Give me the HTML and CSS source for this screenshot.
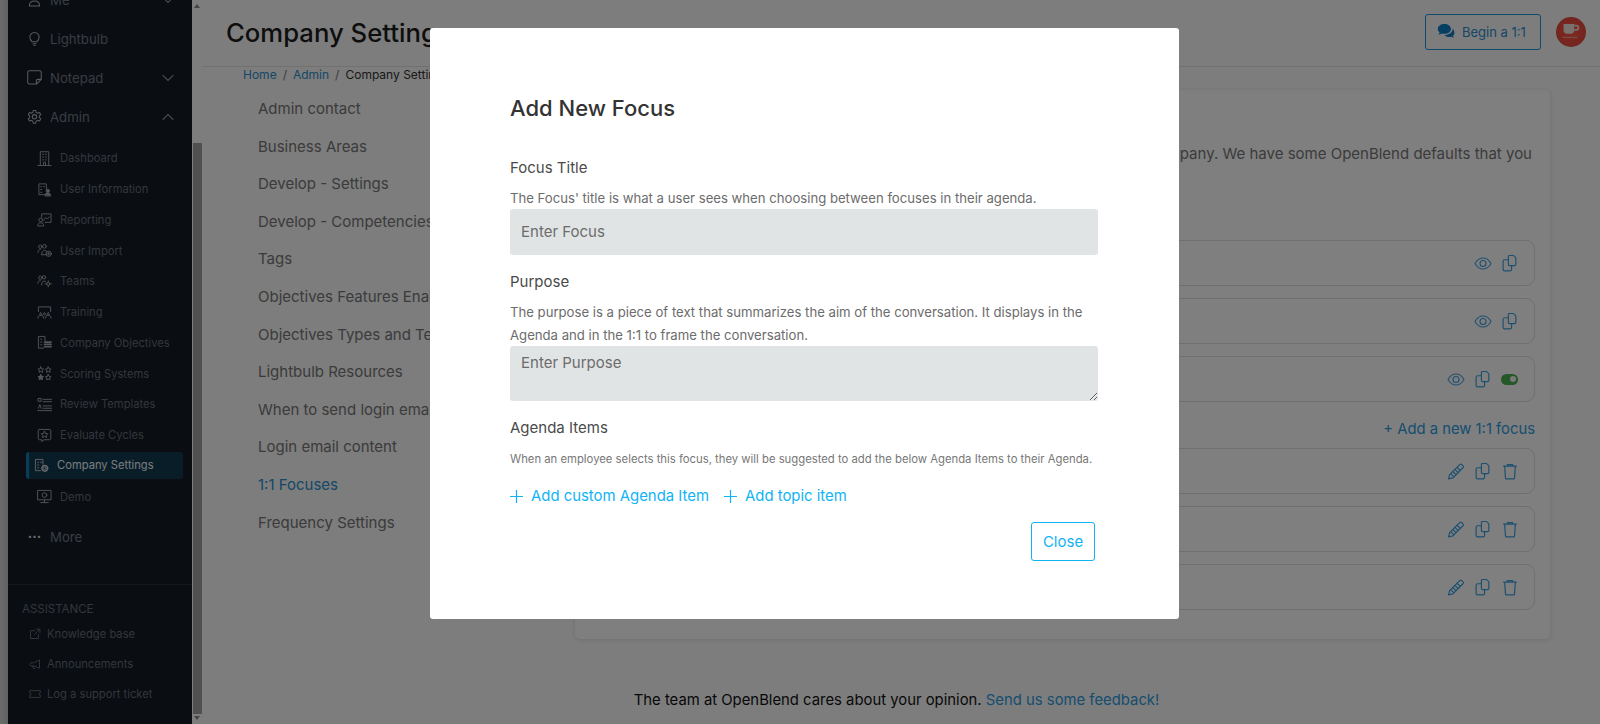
FILE: index.html
```html
<!DOCTYPE html>
<html lang="en">
<head>
<meta charset="utf-8">
<title>Company Settings</title>
<link rel="stylesheet" href="styles.css">
</head>
<body>
<svg class="defs" width="0" height="0" aria-hidden="true">
  <symbol id="eye" viewBox="0 0 18 14"><path d="M1 7c2-3.600 4.800-5.500 8-5.500S15 3.400 17 7c-2 3.600-4.800 5.500-8 5.500S3 10.600 1 7z"/><circle cx="9" cy="7" r="3"/></symbol>
  <symbol id="copy" viewBox="0 0 15 16"><path d="M6 1.500c0-.6.400-1 1-1h3.500c.6 0 2.500 2 2.500 2.500v6c0 .6-.4 1-1 1H7c-.6 0-1-.4-1-1z"/><path d="M6 4.500H2.500c-.8 0-1.500.7-1.500 1.500v7.500c0 .8.700 1.500 1.500 1.500h5c.8 0 1.500-.7 1.500-1.500V10"/></symbol>
  <symbol id="pencil" viewBox="0 0 16 16"><path d="M1 15l1-4L11.500 1.500c.6-.6 1.400-.6 2 0l1 1c.6.6.6 1.400 0 2L5 14z"/><path d="M3 10l3 3M5 8l3 3M7 6l3 3M9 4l3 3"/></symbol>
  <symbol id="trash" viewBox="0 0 14 16"><path d="M1 3h12M4.500 3V1.500h5V3M2 3l.7 11c0 .6.500 1 1 1h6.600c.5 0 1-.4 1-1L12 3"/></symbol>
  <symbol id="down" viewBox="0 0 12 8"><path d="M1 1.500l5 5 5-5"/></symbol>
  <symbol id="up" viewBox="0 0 12 8"><path d="M1 6.500l5-5 5 5"/></symbol>
  <symbol id="plus" viewBox="0 0 12 12"><path d="M6 0v12M0 6h12"/></symbol>
</svg>
<div class="app">
  <div class="edge"></div>
  <aside class="sidebar">
    <nav class="nav">
      <a class="top"><svg class="ti" viewBox="0 0 16 16"><circle cx="8" cy="4.500" r="3"/><path d="M2.500 15c0-3.500 2-5.500 5.500-5.500s5.500 2 5.500 5.500z"/></svg><span>Me</span><svg class="chev"><use href="#down"/></svg></a>
      <a class="top"><svg class="ti" viewBox="0 0 16 16"><path d="M5.500 11.500C4 10 3 8.500 3 6.500a5 5 0 0 1 10 0c0 2-1 3.500-2.500 5zM6 13.500h4M7 15.500h2"/></svg><span>Lightbulb</span></a>
      <a class="top"><svg class="ti" viewBox="0 0 16 16"><path d="M2.500.8h11c.9 0 1.700.8 1.700 1.700v7.500l-5 5H2.500c-.9 0-1.700-.8-1.700-1.700v-10.800C.8 1.600 1.600.8 2.500.8zM15 10h-3.500c-.8 0-1.500.7-1.500 1.500V15"/></svg><span>Notepad</span><svg class="chev"><use href="#down"/></svg></a>
      <a class="top"><svg class="ti" viewBox="0 0 16 16"><path d="M6.700 1.500h2.600l.4 2 1.700 1 2-.7 1.300 2.300-1.600 1.300v1.800l1.600 1.300-1.300 2.300-2-.7-1.700 1-.4 2H6.700l-.4-2-1.700-1-2 .7-1.300-2.300 1.600-1.300V7.400L1.300 6.100l1.300-2.300 2 .7 1.700-1z"/><circle cx="8" cy="8.300" r="2.300"/></svg><span>Admin</span><svg class="chev"><use href="#up"/></svg></a>
      <div class="subs">
        <a class="sub"><svg class="si" viewBox="0 0 16 16"><path d="M3.500 15.500V.8h9v14.700M1 15.500h14M6 3.500h1M9 3.500h1M6 6.500h1M9 6.500h1M6 9.500h1M9 9.500h1M7 15v-3h2v3"/></svg><span>Dashboard</span></a>
        <a class="sub"><svg class="si" viewBox="0 0 16 16"><path d="M8 13.500H2V2h8v6M4 5h1M7 5h1M4 8h1M4 11h1"/><circle cx="11.500" cy="9.500" r="1.700" class="solid"/><path class="solid" d="M8.500 14.500c0-2 1.300-3 3-3s3 1 3 3z"/></svg><span>User Information</span></a>
        <a class="sub"><svg class="si" viewBox="0 0 16 16"><path d="M5 5.500V2h10v9H8.500M7 8.500l2.500-2.500 1.500 1.500 2.500-2.500"/><circle cx="4" cy="8.500" r="2"/><path d="M.8 14.500c0-2 1.200-3 3.200-3s3.200 1 3.200 3z"/></svg><span>Reporting</span></a>
        <a class="sub"><svg class="si" viewBox="0 0 16 16"><circle cx="3.500" cy="4" r="1.800"/><circle cx="8" cy="3.500" r="2"/><path d="M1 10c0-2 1-3 2.500-3M5 12.500c0-3 1-4.500 3-4.500 1 0 2 .4 2.500 1.200M5 12.500h5"/><circle cx="12.500" cy="11.500" r="2.800"/><path d="M12.500 10v3M11 11.500h3"/></svg><span>User Import</span></a>
        <a class="sub"><svg class="si" viewBox="0 0 16 16"><circle cx="3.500" cy="4" r="1.800"/><circle cx="7.500" cy="3.500" r="1.800"/><path d="M1 10c0-2 1-3 2.500-3M5 12c0-3 1-4.500 2.500-4.500 1 0 1.500.4 2 1"/><circle cx="12" cy="10.500" r="1.600"/><path d="M12 7.300v1.500M12 12.200v1.500M8.800 10.500h1.500M13.700 10.500h1.500"/></svg><span>Teams</span></a>
        <a class="sub"><svg class="si" viewBox="0 0 16 16"><path d="M1.500 7V2h13v5M4 8.300a1.200 1.200 0 1 0 .01 0M8 8.300a1.200 1.200 0 1 0 .01 0M12 8.300a1.200 1.200 0 1 0 .01 0M1 14c0-2 1-3 3-3s3 1 3 3M9 14c0-2 1-3 3-3s3 1 3 3"/></svg><span>Training</span></a>
        <a class="sub"><svg class="si" viewBox="0 0 16 16"><path d="M7 14H1.500V1.500h7V6M4 4.500h1M4 7.500h1M4 10.500h1"/><path class="wide" d="M8 7.500h7M8 10h7M8 12.500h7"/></svg><span>Company Objectives</span></a>
        <a class="sub"><svg class="si" viewBox="0 0 16 16"><path d="M4 1l1 2 2 .3-1.500 1.400.4 2L4 5.800 2.100 6.700l.4-2L1 3.300 3 3zM12 1l1 2 2 .3-1.500 1.400.4 2L12 5.800l-1.900.9.4-2L9 3.300 11 3z"/><path class="solid" d="M4 9l1 2 2 .3-1.500 1.400.4 2L4 13.800l-1.900.9.4-2L1 11.300 3 11z"/><path d="M12 9l1 2 2 .3-1.500 1.400.4 2L12 13.800l-1.900.9.4-2L9 11.300 11 11z"/></svg><span>Scoring Systems</span></a>
        <a class="sub"><svg class="si" viewBox="0 0 16 16"><path d="M6.500 2.500h9M6.500 5h9M6.500 9.500h9M6.500 12h9M.8 14.500h14.700M1.500 1.500h3v3h-3zM1.500 12l1.500-4 1.500 4"/></svg><span>Review Templates</span></a>
        <a class="sub"><svg class="si" viewBox="0 0 16 16"><path d="M2.500 1.500h11c.6 0 1.200.6 1.200 1.200v8.600c0 .6-.6 1.200-1.200 1.200H7.500l-2.500 2v-2H2.500c-.6 0-1.200-.6-1.200-1.200V2.700c0-.6.600-1.200 1.200-1.200z"/><path d="M8 3.500l1.200 2.300 2.300.3-1.700 1.700.4 2.300L8 9l-2.200 1.100.4-2.300L4.500 6.100l2.300-.3z"/></svg><span>Evaluate Cycles</span></a>
        <a class="sub active"><svg class="si" viewBox="0 0 16 16"><path d="M7 13.500H1.500V1.500h8v5M4 4.500h1M7 4.500h1M4 7.500h1M4 10.500h1"/><circle cx="11.500" cy="11" r="1.500"/><circle cx="11.500" cy="11" r="3" class="dash"/></svg><span>Company Settings</span></a>
        <a class="sub"><svg class="si" viewBox="0 0 16 16"><path d="M1 1.500h14v10H1zM8 11.500v3M4 14.500h8"/><circle cx="8" cy="6.500" r="2.500"/></svg><span>Demo</span></a>
      </div>
      <a class="top more"><span class="dots">•••</span><span>More</span></a>
    </nav>
    <div class="assist">
      <p class="assist-title">ASSISTANCE</p>
      <a class="help"><svg class="hi" viewBox="0 0 16 16"><path d="M8 3.500H2v10.500h10.500V8M9 1.500h5.500V7M14 2L7 9"/></svg><span>Knowledge base</span></a>
      <a class="help"><svg class="hi" viewBox="0 0 16 16"><path d="M14 2.500v11L6 10.500H2.500L1 8.500l1.500-2H6zM5 10.500l1 3.500h2"/></svg><span>Announcements</span></a>
      <a class="help"><svg class="hi" viewBox="0 0 16 16"><path d="M1 3.500h14v3a1.500 1.500 0 0 0 0 3v3H1v-3a1.500 1.500 0 0 0 0-3z"/></svg><span>Log a support ticket</span></a>
    </div>
  </aside>
  <div class="scrollbar">
    <span class="arrow-up"></span>
    <span class="thumb"></span>
    <span class="arrow-down"></span>
  </div>
  <main class="main">
    <header class="topbar">
      <h1 class="title">Company Settings</h1>
      <div class="actions">
        <a class="begin"><svg class="begin-icon" viewBox="0 0 18 16"><path d="M7 1C3.500 1 .8 3 .8 5.600c0 1.300.7 2.400 1.700 3.200-.2.800-.7 1.500-1.200 2 1.200 0 2.300-.5 3-1 .8.300 1.700.4 2.700.4 3.500 0 6.200-2 6.200-4.600S10.500 1 7 1z"/><path d="M14.800 5.500c.1 3.200-3 5.700-6.800 5.700h-.9c.9 1.200 2.500 2 4.400 2 .7 0 1.400-.1 2-.3.6.4 1.500.8 2.600.8-.4-.4-.8-1-1-1.600.9-.7 1.400-1.600 1.400-2.600 0-1.700-.7-3.100-1.700-4z"/></svg><span>Begin a 1:1</span></a>
        <div class="avatar"><svg class="cup" viewBox="0 0 18 16"><path d="M2 1h10v6c0 1.700-1.300 3-3 3H5c-1.700 0-3-1.300-3-3z"/><path class="cup-ear" d="M12 2.500h2c1.200 0 2 .8 2 2s-.8 2-2 2h-2"/><path class="cup-base" d="M1 13.500h14"/></svg></div>
      </div>
    </header>
    <div class="crumbs"><a>Home</a><i>/</i><a>Admin</a><i>/</i><span>Company Settings</span></div>
    <div class="content">
      <ul class="side">
        <li>Admin contact</li>
        <li>Business Areas</li>
        <li>Develop - Settings</li>
        <li>Develop - Competencies</li>
        <li>Tags</li>
        <li>Objectives Features Enabled</li>
        <li>Objectives Types and Terms</li>
        <li>Lightbulb Resources</li>
        <li>When to send login emails</li>
        <li>Login email content</li>
        <li class="cur">1:1 Focuses</li>
        <li>Frequency Settings</li>
      </ul>
      <section class="card">
        <p class="intro">Focuses frame the conversations of your company. We have some OpenBlend defaults that you</p>
        <div class="rows">
          <div class="row"><button class="ib"><svg class="ic"><use href="#eye"/></svg></button><button class="ib"><svg class="ic"><use href="#copy"/></svg></button></div>
          <div class="row"><button class="ib"><svg class="ic"><use href="#eye"/></svg></button><button class="ib"><svg class="ic"><use href="#copy"/></svg></button></div>
          <div class="row"><button class="ib"><svg class="ic"><use href="#eye"/></svg></button><button class="ib"><svg class="ic"><use href="#copy"/></svg></button><span class="ib"><span class="toggle"></span></span></div>
        </div>
        <a class="addnew">+ Add a new 1:1 focus</a>
        <div class="rows">
          <div class="row"><button class="ib"><svg class="ic"><use href="#pencil"/></svg></button><button class="ib"><svg class="ic"><use href="#copy"/></svg></button><button class="ib"><svg class="ic"><use href="#trash"/></svg></button></div>
          <div class="row"><button class="ib"><svg class="ic"><use href="#pencil"/></svg></button><button class="ib"><svg class="ic"><use href="#copy"/></svg></button><button class="ib"><svg class="ic"><use href="#trash"/></svg></button></div>
          <div class="row"><button class="ib"><svg class="ic"><use href="#pencil"/></svg></button><button class="ib"><svg class="ic"><use href="#copy"/></svg></button><button class="ib"><svg class="ic"><use href="#trash"/></svg></button></div>
        </div>
      </section>
    </div>
    <p class="foot">The team at OpenBlend cares about your opinion. <a>Send us some feedback!</a></p>
  </main>
</div>
<div class="overlay">
  <div class="modal">
    <h2 class="m-title">Add New Focus</h2>
    <label class="m-label first">Focus Title</label>
    <p class="m-help">The Focus' title is what a user sees when choosing between focuses in their agenda.</p>
    <input class="m-input" placeholder="Enter Focus">
    <label class="m-label">Purpose</label>
    <p class="m-help tall">The purpose is a piece of text that summarizes the aim of the conversation. It displays in the Agenda and in the 1:1 to frame the conversation.</p>
    <textarea class="m-area" placeholder="Enter Purpose"></textarea>
    <label class="m-label">Agenda Items</label>
    <p class="m-help small">When an employee selects this focus, they will be suggested to add the below Agenda Items to their Agenda.</p>
    <div class="m-links">
      <a class="m-link"><svg class="plus"><use href="#plus"/></svg>Add custom Agenda Item</a>
      <a class="m-link"><svg class="plus"><use href="#plus"/></svg>Add topic item</a>
    </div>
    <div class="m-foot"><button class="close">Close</button></div>
  </div>
</div>
</body>
</html>
```
FILE: styles.css
```css
* { box-sizing: border-box; }
html, body { margin: 0; height: 100%; overflow: hidden; }
body { font-family: Inter, "Liberation Sans", sans-serif; background: #fafafa; color: #222; }
.defs { position: absolute; }
symbol path, symbol circle { fill: none; stroke: currentColor; stroke-width: 1.1; stroke-linecap: round; stroke-linejoin: round; }
a { text-decoration: none; color: inherit; }
svg { display: block; }

.app { display: flex; height: 724px; overflow: hidden; }
.edge { width: 8px; flex: none; background: linear-gradient(90deg, #d8d8d8, #c4c4c4); }

.sidebar { width: 184px; flex: none; background: #141a24; display: flex; flex-direction: column; overflow: hidden; }
.nav { margin-top: -20px; padding-left: 12px; padding-right: 15px; }
.top { display: flex; align-items: center; height: 39px; font-size: 13.2px; color: #747a84; }
.ti { width: 15px; height: 15px; margin-right: 9px; flex: none; margin-left: 7px; fill: none; stroke: #b4b6b8; stroke-width: 1.1; stroke-linejoin: round; }
.top > span:not(.dots) { flex: 1; margin-left: -1px; }
.chev { width: 12px; height: 8px; color: #8a8f96; fill: none; stroke: currentColor; stroke-width: 1.4; margin-right: 3px; flex: none; }
.subs { padding-top: 7px; padding-bottom: 5px; }
.sub { display: flex; align-items: center; height: 30.75px; font-size: 11.2px; color: #686e76; padding-left: 9px; }
.si { width: 15px; height: 15px; flex: none; margin-right: 8px; margin-left: 8px; fill: none; stroke: #a8aaad; stroke-width: 1; stroke-linejoin: round; stroke-linecap: round; }
.si .solid { fill: #a8aaad; }
.si .wide { stroke-width: 1.8; }
.si .dash { stroke-dasharray: 1.6 1.2; stroke-width: 1.8; }
.sub.active { height: 27px; margin: 1px -6px 3px 6px; padding-left: 5px; background: #123a50; border-left: 3px solid #0f7db5; border-radius: 3px; color: #eef6fa; }
.sub.active .si { margin-left: 0; stroke: #c4c8cc; }
.dots { font-size: 7px; color: #ddd; letter-spacing: .5px; width: 16px; margin-left: 8px; flex: none; margin-right: 7px; }

.assist { margin-top: auto; height: 140px; border-top: 1px solid #2a3038; padding: 16px 0 0 14px; }
.assist-title { margin: 0 0 2px; font-size: 11.5px; line-height: 16px; color: #686e76; }
.help { display: flex; align-items: center; height: 30px; font-size: 11.2px; color: #686e76; }
.hi { width: 12px; height: 12px; margin-left: 7px; margin-right: 6px; fill: none; stroke: #777b80; stroke-width: 1.1; stroke-linejoin: round; flex: none; }

.scrollbar { width: 10px; flex: none; background: #fafafa; display: flex; flex-direction: column; align-items: center; }
.arrow-up { width: 0; height: 0; margin-top: 4px; border: 3px solid transparent; border-top: 0; border-bottom: 4px solid #888; }
.thumb { width: 9px; margin-top: 135px; height: 571px; background: #a0a0a0; }
.arrow-down { width: 0; height: 0; margin-top: 2px; border: 3px solid transparent; border-bottom: 0; border-top: 4px solid #888; }

.main { flex: 1; min-width: 0; display: flex; flex-direction: column; }
.topbar { height: 67px; flex: none; border-bottom: 1px solid #e2e2e2; display: flex; align-items: center; justify-content: space-between; padding: 0 14px 3px 24px; }
.title { margin: 2px 0 0; font-size: 25.7px; font-weight: 500; color: #1c1c1c; }
.actions { display: flex; align-items: center; gap: 15px; }
.begin { display: flex; align-items: center; gap: 6px; width: 116px; height: 36px; padding-left: 11px; border: 1px solid #1f95d8; border-radius: 3px; font-size: 13px; color: #2c8fcc; }
.begin-icon { width: 19px; height: 17px; fill: #0d7fc4; }
.avatar { width: 30px; height: 30px; border-radius: 50%; background: radial-gradient(circle at 50% 50%, #ff5240, #d9483c); display: flex; align-items: center; justify-content: center; }
.cup { width: 20px; height: 17px; fill: #f2e2dc; }
.cup-ear { fill: none; stroke: #f2e2dc; stroke-width: 1.6; }
.cup-base { fill: none; stroke: #e8a8a0; stroke-width: 1; }

.crumbs { height: 23px; flex: none; padding-left: 41px; font-size: 12px; line-height: 15px; color: #333; white-space: nowrap; }
.crumbs a { color: #2c8fcc; }
.crumbs i { font-style: normal; margin: 0 6px; color: #777; }

.content { display: flex; flex: none; }
.side { list-style: none; margin: 0; padding: 0 0 0 56px; width: 373px; flex: none; }
.side li { height: 37.6px; line-height: 37.6px; font-size: 15px; color: #767676; white-space: nowrap; overflow: hidden; }
.side .cur { color: #2c8fcc; }

.card { width: 975px; height: 549px; flex: none; background: #fff; border-radius: 5px; box-shadow: 0 1px 4px rgba(0,0,0,.12); padding: 52px 15px 0; }
.intro { margin: 0 0 74px; font-size: 15px; line-height: 24px; color: #777; text-align: right; white-space: nowrap; padding-right: 3px; }
.rows { display: flex; flex-direction: column; gap: 12px; }
.row { height: 46px; border: 1px solid #dfdfdf; border-radius: 9px; display: flex; align-items: center; justify-content: flex-end; padding-right: 11px; }
.ib { width: 27px; height: 20px; padding: 0; border: 0; background: none; display: flex; align-items: center; justify-content: center; color: #3aa0e0; }
.ic { width: 18px; height: 17px; fill: none; stroke: #3aa0e0; }
.toggle { position: relative; display: block; width: 17px; height: 11px; background: #4caf50; border-radius: 6px; }
.toggle::after { content: ""; position: absolute; right: 2px; top: 2.500px; width: 6px; height: 6px; border-radius: 50%; background: #f4f4f4; }
.addnew { display: block; height: 46px; padding-top: 17px; text-align: right; font-size: 14.8px; line-height: 20px; color: #2c9ce0; }

.foot { margin: 51px 9px 0 0; font-size: 14.85px; line-height: 20px; text-align: center; color: #111; }
.foot a { color: #2c9ce0; }

.overlay { position: fixed; inset: 0; background: rgba(0,0,0,.5); padding: 28px 0 0 430px; }
.modal { width: 749px; height: 591px; background: #fff; border-radius: 3px; padding: 65px 81px 0 80px; color: #444; }
.m-title { margin: 0; font-size: 22px; line-height: 30px; font-weight: 500; color: #333; }
.m-label { display: block; margin-top: 17px; font-size: 15px; line-height: 20px; color: #4a4a4a; }
.m-label.first { margin-top: 35px; }
.m-help { margin: 9px 0 0; font-size: 13.15px; line-height: 22px; color: #6c6c6c; }
.m-help.tall { line-height: 23px; margin-bottom: -1px; }
.m-help.small { margin-top: 11px; font-size: 11.3px; line-height: 20px; color: #777; white-space: nowrap; }
.m-input, .m-area { display: block; width: 100%; border: 0; border-radius: 3px; background: #e1e4e5; font-family: inherit; font-size: 15px; color: #444; padding: 0 11px; outline: 0; }
.m-input { height: 46px; padding-bottom: 2px; }
.m-area { height: 55px; padding-top: 7px; line-height: 20px; }
.m-input::placeholder, .m-area::placeholder { color: #6c6c6c; opacity: 1; }
.m-links { display: flex; gap: 15px; margin-top: 17px; }
.m-link { display: flex; align-items: center; gap: 8px; font-size: 14.9px; line-height: 20px; color: #11b3f5; }
.plus { width: 13px; height: 13px; stroke: #11b3f5; fill: none; }
.m-foot { display: flex; justify-content: flex-end; margin: 16px -2px 0 0; padding-right: 5px; }
.close { width: 64px; height: 39px; padding: 0; background: #fff; border: 1px solid #11b3f5; border-radius: 3px; font-family: inherit; font-size: 15px; color: #11b3f5; }
```
